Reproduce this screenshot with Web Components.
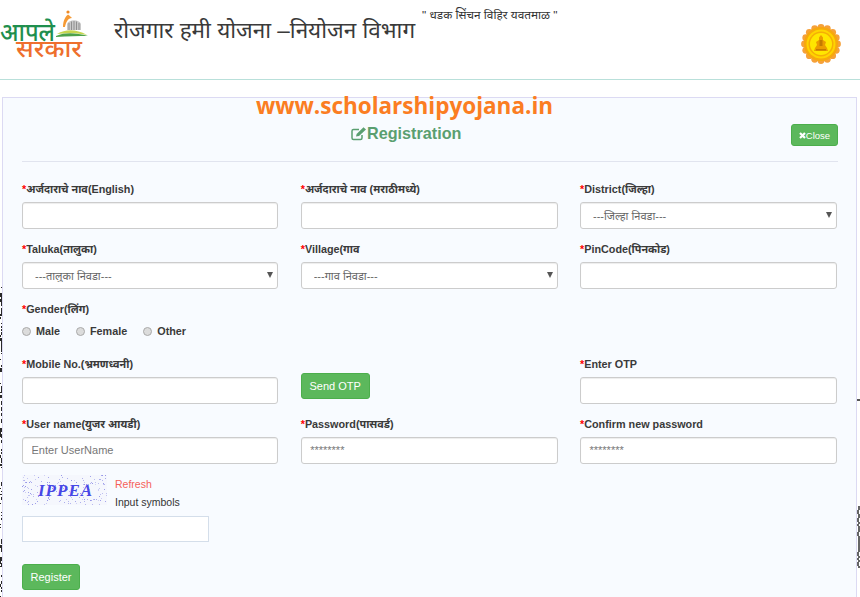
<!DOCTYPE html>
<html>
<head>
<meta charset="utf-8">
<title>Registration</title>
<style>
  html, body { margin: 0; padding: 0; background: #fff; }
  body { font-family: "Liberation Sans", "Noto Sans", sans-serif; color: #333; height: 597px; overflow: hidden; position: relative; }
</style>
</head>
<body>
<edge-strips></edge-strips>
<site-header></site-header>
<reg-panel>
  <form-field label="अर्जदाराचे नाव(English)"></form-field>
  <form-field label="अर्जदाराचे नाव (मराठीमध्ये)"></form-field>
  <form-field label="District(जिल्हा)" type="select" value="---जिल्हा निवडा---"></form-field>

  <form-field label="Taluka(तालुका)" type="select" value="---तालुका निवडा---"></form-field>
  <form-field label="Village(गाव" type="select" value="---गाव निवडा---"></form-field>
  <form-field label="PinCode(पिनकोड)"></form-field>

  <gender-field></gender-field>

  <form-field label="Mobile No.(भ्रमणध्वनी)"></form-field>
  <otp-button></otp-button>
  <form-field label="Enter OTP"></form-field>

  <form-field label="User name(युजर आयडी)" placeholder="Enter UserName"></form-field>
  <form-field label="Password(पासवर्ड)" placeholder="********"></form-field>
  <form-field label="Confirm new password" placeholder="********"></form-field>

  <captcha-box></captcha-box>
</reg-panel>

<script>
class EdgeStrips extends HTMLElement {
  constructor() {
    super();
    this.attachShadow({ mode: "open" });
  }
  connectedCallback() {
    // speckled page background that shows either side of the panel
    let seed = 7;
    const rnd = () => (seed = (seed * 16807) % 2147483647) / 2147483647;
    let left = "";
    for (let y = 287; y < 597; y += 3) {
      if (rnd() < 0.72) {
        left += `<rect x="${rnd() < 0.5 ? 0 : 1}" y="${y}" width="${rnd() < 0.5 ? 1 : 2}" height="${1 + Math.floor(rnd() * 4)}" fill="#2a2a2a"/>`;
      }
    }
    let right = `<rect x="857" y="399" width="3" height="2" fill="#555"/>`;
    for (let y = 506; y < 568; y += 2) {
      right += `<rect x="${857 + (rnd() < 0.5 ? 0 : 1)}" y="${y}" width="2" height="2" fill="#666"/>`;
    }
    this.shadowRoot.innerHTML = /*html*/`
      <style>
        :host { display: block; position: absolute; inset: 0; z-index: 0; }
        svg { display: block; }
      </style>
      <svg width="860" height="597">${left}${right}</svg>
    `;
  }
}
customElements.define("edge-strips", EdgeStrips);

class SiteLogo extends HTMLElement {
  constructor() {
    super();
    this.attachShadow({ mode: "open" });
  }
  connectedCallback() {
    this.shadowRoot.innerHTML = /*html*/`
      <style>
        :host { display: block; width: 90px; height: 72px; }
        svg { display: block; }
        text { font-family: "Noto Sans", "Liberation Sans", sans-serif; font-weight: 500; }
      </style>
      <svg width="90" height="72" viewBox="0 0 90 72">
        <circle cx="68" cy="12" r="1.6" fill="#f08a24"/>
        <path d="M63 27 C63 20 66 16 68 14.5 C70 16 71 17 72 18 C68 18 66 22 65 27 Z" fill="#f59a35"/>
        <path d="M67 30 V24 C69 19 79 19 81 24 V30 Z" fill="#c9c9c9"/>
        <path d="M69 23 V30 M71.5 21.500 V30 M74 21 V30 M76.500 21.500 V30 M79 23 V30" stroke="#8f8f8f" stroke-width="1"/>
        <path d="M57 34 C66 29 76 29 87 35 C78 33 68 33 57 34 Z" fill="#c7d64f"/>
        <path d="M56 36 C66 32 76 33 88 36 C78 36 68 36 56 37 Z" fill="#4da24a"/>
        <text x="0" y="41" font-size="26" fill="#1f8f4e" textLength="55" lengthAdjust="spacingAndGlyphs">आपले</text>
        <text x="16" y="57" font-size="24" fill="#ee6f2d" textLength="66" lengthAdjust="spacingAndGlyphs">सरकार</text>
      </svg>
    `;
  }
}
customElements.define("site-logo", SiteLogo);

class StateSeal extends HTMLElement {
  constructor() {
    super();
    this.attachShadow({ mode: "open" });
  }
  connectedCallback() {
    let scallops = "";
    for (let i = 0; i < 16; i++) {
      const a = (i * Math.PI) / 8;
      scallops += `<circle cx="${(20 + 16.5 * Math.cos(a)).toFixed(2)}" cy="${(20 + 16.5 * Math.sin(a)).toFixed(2)}" r="3.4" fill="#f6a13a"/>`;
    }
    this.shadowRoot.innerHTML = /*html*/`
      <style>
        :host { display: block; width: 40px; height: 40px; }
        svg { display: block; }
      </style>
      <svg width="40" height="40" viewBox="0 0 40 40">
        ${scallops}
        <circle cx="20" cy="20" r="17" fill="#f7a90c"/>
        <circle cx="20" cy="20" r="14.500" fill="#ffd400"/>
        <circle cx="20" cy="20" r="12.500" fill="#f5ae06"/>
        <circle cx="20" cy="20" r="11" fill="#ffe600"/>
        <path d="M20 11 L22 13.500 L22 16 L25 18 L24 21 L26 24 L27 27 H13 L14 24 L16 21 L15 18 L18 16 L18 13.500 Z" fill="#ec9c00"/>
        <path d="M18.500 16 H21.500 V22 H18.500 Z M15 25 H25 V26.500 H15 Z" fill="#c47a00"/>
      </svg>
    `;
  }
}
customElements.define("state-seal", StateSeal);

class SiteHeader extends HTMLElement {
  constructor() {
    super();
    this.attachShadow({ mode: "open" });
  }
  connectedCallback() {
    this.shadowRoot.innerHTML = /*html*/`
      <style>
        :host { display: flex; position: relative; z-index: 1; box-sizing: border-box; height: 80px; border-bottom: 1px solid #b9e0da; background: #fff; }
        site-logo { flex: none; }
        .title { margin: 16px 0 0 24px; font-size: 22.5px; line-height: 30px; color: #3a3a3a; white-space: nowrap; }
        .note { margin: 8px 0 0 7px; font-size: 11.8px; line-height: 15px; color: #333; white-space: nowrap; }
        state-seal { margin: 24px 19px 0 auto; flex: none; }
      </style>
      <site-logo></site-logo>
      <div class="title">रोजगार हमी योजना –नियोजन विभाग</div>
      <div class="note">" धडक सिंचन विहिर यवतमाळ "</div>
      <state-seal></state-seal>
    `;
  }
}
customElements.define("site-header", SiteHeader);

class RegPanel extends HTMLElement {
  constructor() {
    super();
    this.attachShadow({ mode: "open" });
  }
  connectedCallback() {
    this.shadowRoot.innerHTML = /*html*/`
      <style>
        :host { display: block; position: relative; z-index: 1; box-sizing: border-box; margin: 17px 3px 0 2px; height: 520px; padding: 0 18px 0 19px; background: #f8fbff; border: 1px solid #dcdaf3; border-bottom: 0; }
        .url { height: 16px; padding-left: 234px; font: bold 22.5px/16px "Open Sans", "Liberation Sans", sans-serif; color: #fb7d22; white-space: nowrap; }
        .head { display: flex; align-items: flex-start; margin-top: 10px; padding-left: 329px; height: 37px; }
        h2 { display: flex; align-items: center; margin: 0; font-size: 16.2px; line-height: 19px; font-weight: bold; color: #5a9f70; }
        .close { margin-left: auto; width: 47px; height: 22px; box-sizing: border-box; display: flex; align-items: center; justify-content: center; background: #5cb85c; border: 1px solid #4cae4c; border-radius: 3px; color: #fff; font-size: 9.5px; }
        hr { margin: 0; border: 0; border-top: 1px solid #e1e4ef; }
        .grid { display: grid; grid-template-columns: 256.4px 257px 257px; column-gap: 22.3px; margin: 18px 0 0 0; }
        .register { display: block; margin-top: 22px; width: 58px; height: 26px; box-sizing: border-box; background: #5cb85c; border: 1px solid #4cae4c; border-radius: 3px; color: #fff; font: 11px "Liberation Sans", sans-serif; padding: 0; }
      </style>
      <div class="url">www.scholarshipyojana.in</div>
      <div class="head">
        <h2>
          <svg width="16" height="15" viewBox="0 0 16 15" fill="none">
            <path d="M11 9 V12 A1.500 1.500 0 0 1 9.500 13.500 H2.500 A1.500 1.500 0 0 1 1 12 V5 A1.500 1.500 0 0 1 2.500 3.500 H8" stroke="#5a9f70" stroke-width="1.500"/>
            <path d="M5 10.500 L5.600 8 L12.500 1.200 L15 3.600 L8 10 Z" fill="#5a9f70"/>
          </svg>
          Registration
        </h2>
        <div class="close"><svg width="7" height="7" viewBox="0 0 7 7"><path d="M1 1 L6 6 M6 1 L1 6" stroke="#fff" stroke-width="2.200"/></svg>Close</div>
      </div>
      <hr>
      <div class="grid"><slot></slot></div>
      <button class="register">Register</button>
    `;
  }
}
customElements.define("reg-panel", RegPanel);

class FormField extends HTMLElement {
  constructor() {
    super();
    this.attachShadow({ mode: "open" });
  }
  connectedCallback() {
    const type = this.getAttribute("type");
    const holder = this.getAttribute("placeholder") || "";
    const control = type === "select"
      ? `<div class="wrap"><select><option>${this.getAttribute("value")}</option></select><span class="arrow"></span></div>`
      : `<input type="text" placeholder="${holder}">`;
    this.shadowRoot.innerHTML = /*html*/`
      ${FormField.styles}
      <label><b>*</b>${this.getAttribute("label")}</label>
      ${control}
    `;
  }
  static get styles() {
    return /*css*/`
      <style>
        :host { display: block; height: 60px; font-family: "Liberation Sans", "Noto Sans", sans-serif; }
        label { display: block; height: 18px; line-height: 18px; margin: 0 0 4px 0; font-size: 10.8px; font-weight: bold; color: #3a3a3a; white-space: nowrap; }
        label b { color: #f00; }
        input, select { display: block; width: 100%; height: 27px; box-sizing: border-box; margin: 0; background: #fff; border: 1px solid #ccc; border-radius: 3px; box-shadow: inset 0 1px 1px rgba(0,0,0,.075); font: 11px "Liberation Sans", "Noto Sans", sans-serif; color: #666; outline: 0; }
        input { padding: 0 8.5px 2px; }
        input::placeholder { color: #777; opacity: 1; }
        select { appearance: none; padding: 0 20px 0 12px; }
        .wrap { position: relative; }
        .arrow { position: absolute; right: 5px; top: 10px; border-left: 3px solid transparent; border-right: 3px solid transparent; border-top: 6px solid #555; }
      </style>
    `;
  }
}
customElements.define("form-field", FormField);

class GenderField extends HTMLElement {
  constructor() {
    super();
    this.attachShadow({ mode: "open" });
  }
  connectedCallback() {
    this.shadowRoot.innerHTML = /*html*/`
      <style>
        :host { display: block; grid-column: 1 / -1; height: 55px; font-family: "Liberation Sans", "Noto Sans", sans-serif; }
        .cap { height: 18px; line-height: 18px; font-size: 10.8px; font-weight: bold; color: #3a3a3a; }
        .cap b { color: #f00; }
        .opts { display: flex; margin-top: 4px; height: 18px; align-items: center; font-size: 10.8px; font-weight: bold; color: #3a3a3a; }
        .opt { display: flex; align-items: center; gap: 5px; margin-right: 16px; }
        .dot { width: 9px; height: 9px; box-sizing: border-box; border-radius: 50%; background: #dcdcdc; border: 1px solid #aaa; }
      </style>
      <div class="cap"><b>*</b>Gender(लिंग)</div>
      <div class="opts">
        <span class="opt"><span class="dot"></span>Male</span>
        <span class="opt"><span class="dot"></span>Female</span>
        <span class="opt"><span class="dot"></span>Other</span>
      </div>
    `;
  }
}
customElements.define("gender-field", GenderField);

class OtpButton extends HTMLElement {
  constructor() {
    super();
    this.attachShadow({ mode: "open" });
  }
  connectedCallback() {
    this.shadowRoot.innerHTML = /*html*/`
      <style>
        :host { display: block; padding-top: 18px; }
        button { display: block; width: 69px; height: 26px; box-sizing: border-box; padding: 0; background: #5cb85c; border: 1px solid #4cae4c; border-radius: 3px; color: #fff; font: 11px "Liberation Sans", sans-serif; }
      </style>
      <button>Send OTP</button>
    `;
  }
}
customElements.define("otp-button", OtpButton);

class CaptchaBox extends HTMLElement {
  constructor() {
    super();
    this.attachShadow({ mode: "open" });
  }
  connectedCallback() {
    let seed = 41;
    const rnd = () => (seed = (seed * 16807) % 2147483647) / 2147483647;
    let dots = "";
    for (let i = 0; i < 170; i++) {
      dots += `<rect x="${Math.floor(rnd() * 85)}" y="${Math.floor(rnd() * 30)}" width="1" height="1" fill="#8f8fe6" opacity="${(0.35 + rnd() * 0.6).toFixed(2)}"/>`;
    }
    this.shadowRoot.innerHTML = /*html*/`
      <style>
        :host { display: block; grid-column: 1 / -1; font-family: "Liberation Sans", "Noto Sans", sans-serif; font-size: 10.5px; }
        .top { display: flex; gap: 8px; height: 41px; }
        svg { display: block; background: #f5f7fd; }
        text { font: italic bold 17px "Liberation Serif", serif; fill: #4747e6; letter-spacing: 1px; }
        .side { display: flex; flex-direction: column; }
        .refresh { height: 18px; line-height: 18px; color: #f5605a; }
        .hint { height: 18px; line-height: 18px; color: #333; }
        input { display: block; width: 187px; height: 26px; box-sizing: border-box; margin: 0; background: #fff; border: 1px solid #d4deea; }
      </style>
      <div class="top">
        <svg width="85" height="30" viewBox="0 0 85 30">${dots}<text x="16" y="21">IPPEA</text></svg>
        <div class="side">
          <span class="refresh">Refresh</span>
          <span class="hint">Input symbols</span>
        </div>
      </div>
      <input type="text">
    `;
  }
}
customElements.define("captcha-box", CaptchaBox);
</script>
</body>
</html>
